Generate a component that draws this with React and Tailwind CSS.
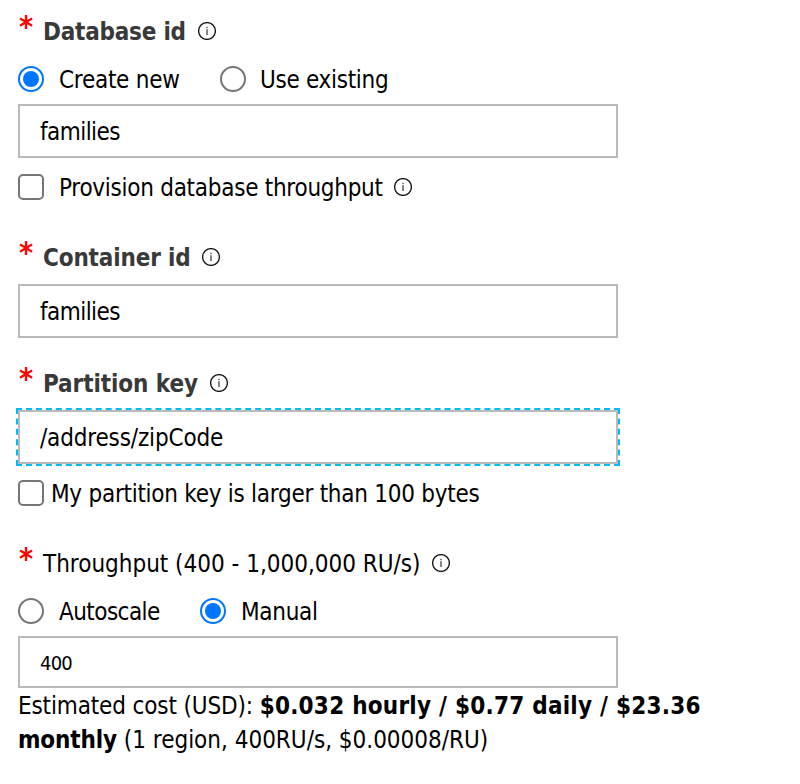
function InfoIcon({ className = "" }) {
  return (
    <svg className={"size-[18px] shrink-0 " + className} viewBox="0 0 18 18" fill="none">
      <circle cx="9" cy="9" r="8.4" stroke="#111" strokeWidth="1.3" />
      <rect x="8.4" y="4.8" width="1.2" height="1.4" fill="#333" />
      <rect x="8.4" y="7.2" width="1.2" height="5.8" fill="#333" />
    </svg>
  );
}

function Required() {
  return (
    <span className="w-[24px] shrink-0 pb-2 text-[30px] font-bold leading-[34px] text-[#fe0000]">*</span>
  );
}

function Label({ children, iconClass, className = "" }) {
  return (
    <div className="flex h-[34px] items-center pl-px">
      <Required />
      <span className={"pt-0.5 " + className}>{children}</span>
      <InfoIcon className={iconClass} />
    </div>
  );
}

function Radio({ checked }) {
  return checked ? (
    <span role="radio" aria-checked="true" className="flex size-[26px] shrink-0 items-center justify-center rounded-full border-2 border-[#0075ff]">
      <span className="size-4 rounded-full bg-[#0075ff]" />
    </span>
  ) : (
    <span role="radio" aria-checked="false" className="size-[26px] shrink-0 rounded-full border-2 border-[#767676]" />
  );
}

function Checkbox() {
  return <span role="checkbox" aria-checked="false" className="size-[26px] shrink-0 rounded-[5px] border-2 border-[#767676]" />;
}

function Field({ value, className = "" }) {
  return (
    <div className={"flex w-[600px] items-center border-2 border-[#bababa] pl-5 " + className}>
      <span className="pt-0.5">{value}</span>
    </div>
  );
}

export default function App() {
  return (
    <main className="h-[784px] w-[800px] overflow-hidden whitespace-nowrap bg-white pl-[18px] pt-[14px] font-['DejaVu_Sans_Condensed','DejaVu_Sans',sans-serif] text-2xl leading-[34px] text-black">
      <Label className="w-[144px] font-bold tracking-[-0.22px] text-[#393939]" iconClass="ml-[11px]">Database id</Label>

      <div className="mt-[14px] flex h-[34px] items-center">
        <Radio checked />
        <span className="ml-[15px] w-[161px] pt-0.5 tracking-[-0.26px]">Create new</span>
        <Radio />
        <span className="ml-[14px] pt-0.5 tracking-[-0.3px]">Use existing</span>
      </div>
      <Field value="families" className="mt-2 h-[54px] tracking-[-0.55px]" />
      <div className="mt-3 flex h-[34px] items-center">
        <Checkbox />
        <span className="ml-[15px] w-[324px] pt-0.5 tracking-[-0.27px]">Provision database throughput</span>
        <InfoIcon className="ml-[11px]" />
      </div>

      <div className="mt-9">
        <Label className="w-[148px] font-bold tracking-[-0.15px] text-[#393939]" iconClass="ml-[11px]">Container id</Label>
      </div>
      <Field value="families" className="mt-[10px] h-[54px] tracking-[-0.55px]" />

      <div className="mt-7">
        <Label className="w-[156px] font-bold tracking-[-0.08px] text-[#393939]" iconClass="ml-[11px]">Partition key</Label>
      </div>
      <Field
        value="/address/zipCode"
        className="mt-[10px] h-[54px] tracking-[-0.16px] outline-2 outline-dashed outline-[#00bcf2]"
      />
      <div className="mt-3 flex h-[34px] items-center">
        <Checkbox />
        <span className="ml-[7px] pt-0.5 tracking-[-0.265px]">My partition key is larger than 100 bytes</span>
      </div>

      <div className="mt-9">
        <Label className="w-[378px] tracking-[-0.01px]" iconClass="ml-[11px]">Throughput (400 - 1,000,000 RU/s)</Label>
      </div>
      <div className="mt-[14px] flex h-[34px] items-center">
        <Radio />
        <span className="ml-[15px] w-[141px] pt-0.5 tracking-[-0.55px]">Autoscale</span>
        <Radio checked />
        <span className="ml-[15px] pt-0.5 tracking-[-0.3px]">Manual</span>
      </div>
      <Field value="400" className="mt-2 h-[52px] text-xl tracking-[-0.8px]" />
      <p className="pt-px">
        <span className="tracking-[-0.14px]">Estimated cost (USD): </span>
        <b className="tracking-[0.24px]">$0.032 hourly / $0.77 daily / $23.36</b>
        <br />
        <b className="tracking-[-0.13px]">monthly</b>
        <span className="tracking-[-0.01px]"> (1 region, 400RU/s, $0.00008/RU)</span>
      </p>
    </main>
  );
}
